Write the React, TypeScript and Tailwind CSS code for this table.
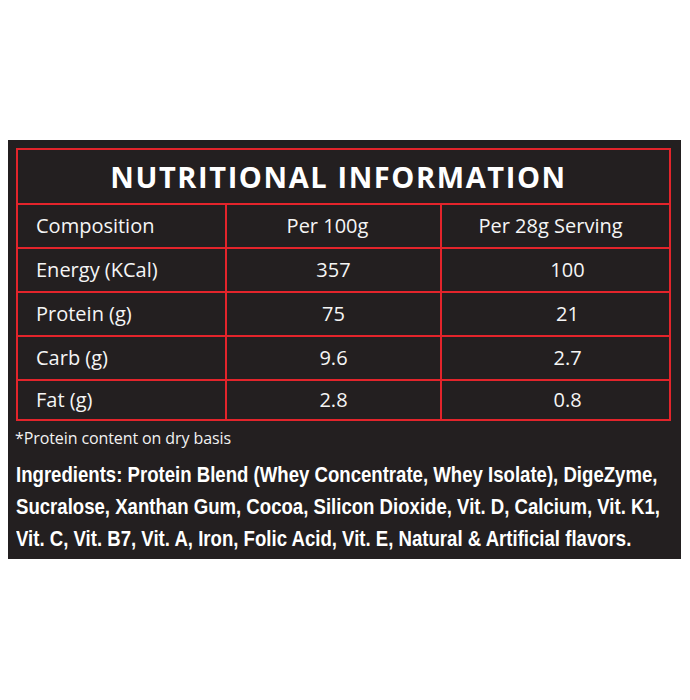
import React from "react";

const rows: [string, string, string][] = [
  ["Energy (KCal)", "357", "100"],
  ["Protein (g)", "75", "21"],
  ["Carb (g)", "9.6", "2.7"],
  ["Fat (g)", "2.8", "0.8"],
];

const cell = "border-2 border-[#e3242b] p-0";

const ingredients = [
  "Ingredients: Protein Blend (Whey Concentrate, Whey Isolate), DigeZyme,",
  "Sucralose, Xanthan Gum, Cocoa, Silicon Dioxide, Vit. D, Calcium, Vit. K1,",
  "Vit. C, Vit. B7, Vit. A, Iron, Folic Acid, Vit. E, Natural & Artificial flavors.",
];

export default function App() {
  return (
    <div className="w-[690px] h-[700px] bg-white pt-[140px] pl-[8px]">
      <div className="w-[673px] h-[419px] bg-[#231f20] pt-[8px] pl-[8px]">
        <table
          className="border-collapse table-fixed w-[653px] text-[#f5f5f5]"
          style={{ fontFamily: '"Open Sans", sans-serif' }}
        >
          <colgroup>
            <col className="w-[209px]" />
            <col className="w-[215px]" />
            <col className="w-[229px]" />
          </colgroup>
          <tbody>
            <tr>
              <td
                colSpan={3}
                className={`${cell} h-[55px] pr-[10px] text-center font-bold text-[29px] tracking-[1.6px] text-white`}
              >
                NUTRITIONAL INFORMATION
              </td>
            </tr>
            <tr>
              <td className={`${cell} h-[44px] pl-[18px] text-[20px]`}>Composition</td>
              <td className={`${cell} h-[44px] pr-[12px] text-center text-[20px]`}>Per 100g</td>
              <td className={`${cell} h-[44px] pr-[10px] text-center text-[20px]`}>Per 28g Serving</td>
            </tr>
            {rows.map(([a, b, c], i) => (
              <tr key={a}>
                <td className={`${cell} ${i === 3 ? "h-[40px]" : "h-[44px]"} pl-[18px] text-[20px]`}>{a}</td>
                <td className={`${cell} text-center text-[20px]`}>{b}</td>
                <td className={`${cell} pl-[24px] text-center text-[20px]`}>{c}</td>
              </tr>
            ))}
          </tbody>
        </table>
        <div
          className="text-[16px] tracking-[-0.1px] text-[#f2f2f2] mt-[6px] -ml-[1px] leading-[22px]"
          style={{ fontFamily: '"Open Sans", sans-serif' }}
        >
          *Protein content on dry basis
        </div>
        <div
          className="mt-[10px] font-bold text-white text-[22px] leading-[32px]"
          style={{ fontFamily: '"Liberation Sans", Arial, sans-serif' }}
        >
          {ingredients.map((l) => (
            <div key={l} className="whitespace-nowrap origin-left scale-x-[0.845]">
              {l}
            </div>
          ))}
        </div>
      </div>
    </div>
  );
}
